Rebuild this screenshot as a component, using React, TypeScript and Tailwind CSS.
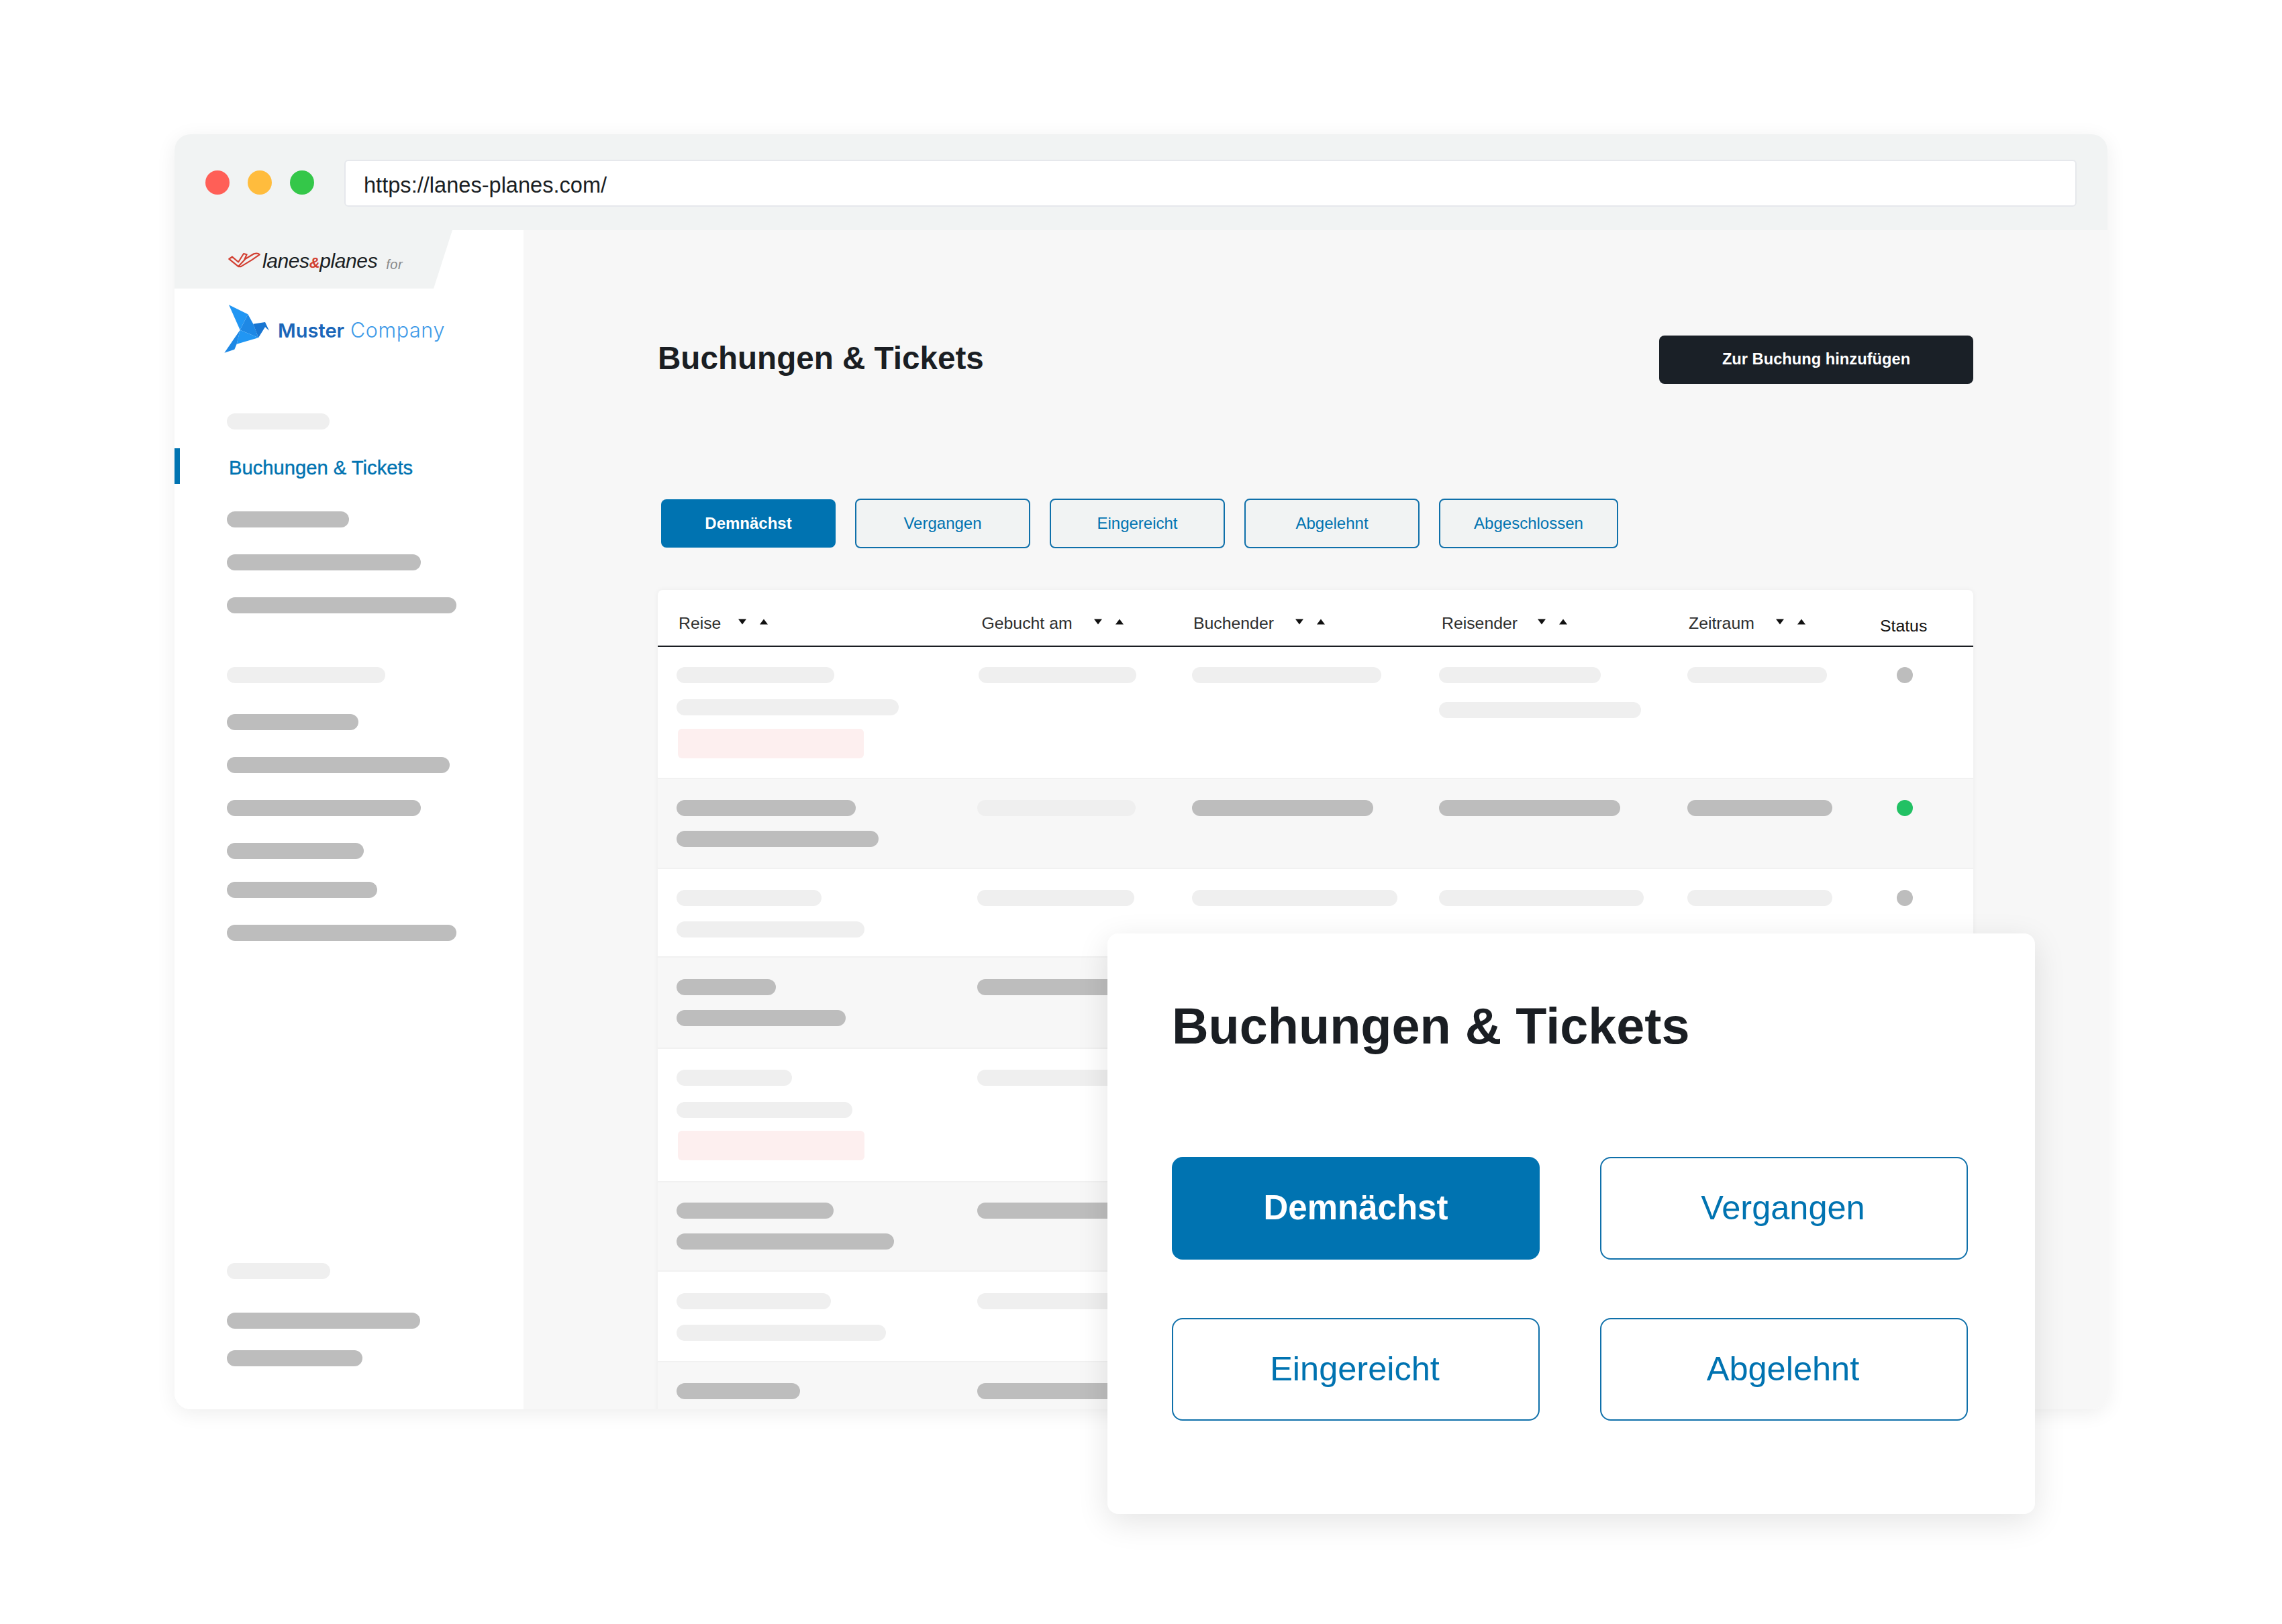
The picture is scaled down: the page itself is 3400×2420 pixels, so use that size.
import React from 'react';

const SANS = "font-['Liberation_Sans',Arial,sans-serif]";

type SideItem = { w: number; tone: 'light' | 'dark'; mt: string };

const sideTop: SideItem[] = [
  { w: 182, tone: 'dark', mt: 'mt-[41px]' },
  { w: 289, tone: 'dark', mt: 'mt-[40px]' },
  { w: 342, tone: 'dark', mt: 'mt-[40px]' },
  { w: 236, tone: 'light', mt: 'mt-[80px]' },
  { w: 196, tone: 'dark', mt: 'mt-[46px]' },
  { w: 332, tone: 'dark', mt: 'mt-[40px]' },
  { w: 289, tone: 'dark', mt: 'mt-[40px]' },
  { w: 204, tone: 'dark', mt: 'mt-[40px]' },
  { w: 224, tone: 'dark', mt: 'mt-[34px]' },
  { w: 342, tone: 'dark', mt: 'mt-[40px]' },
  { w: 154, tone: 'light', mt: 'mt-[480px]' },
  { w: 288, tone: 'dark', mt: 'mt-[50px]' },
  { w: 202, tone: 'dark', mt: 'mt-[32px]' },
];

const tabs = [
  { label: 'Vergangen', w: 'w-[261px]' },
  { label: 'Eingereicht', w: 'w-[261px]' },
  { label: 'Abgelehnt', w: 'w-[261px]' },
  { label: 'Abgeschlossen', w: 'w-[267px]' },
];

const columns = [
  { label: 'Reise', cell: 'w-[451.5px]', text: 'w-[88px]' },
  { label: 'Gebucht am', cell: 'w-[315.5px]', text: 'w-[166.5px]' },
  { label: 'Buchender', cell: 'w-[370px]', text: 'w-[151px]' },
  { label: 'Reisender', cell: 'w-[368px]', text: 'w-[142px]' },
  { label: 'Zeitraum', cell: 'w-[287px]', text: 'w-[129px]' },
];

type Row = {
  alt: boolean;
  size: string;
  gap: string;
  trip: number[];
  pink?: number;
  booked: number;
  bookedLight?: boolean;
  bookedOffset?: string;
  rest?: { booker: number; traveller: number[]; period: number; dot: string };
};

const rows: Row[] = [
  { alt: false, size: 'h-[197px] pt-[30px]', gap: 'gap-[24px]', trip: [235, 331], pink: 277, booked: 235, bookedOffset: 'ml-[2px]',
    rest: { booker: 282, traveller: [241, 301], period: 208, dot: 'bg-[#bdbdbd]' } },
  { alt: true, size: 'h-[134px] pt-[31px]', gap: 'gap-[22px]', trip: [267, 301], booked: 236, bookedLight: true,
    rest: { booker: 270, traveller: [270], period: 216, dot: 'bg-[#22c164]' } },
  { alt: false, size: 'h-[132px] pt-[31px]', gap: 'gap-[23px]', trip: [216, 280], booked: 234,
    rest: { booker: 306, traveller: [305], period: 216, dot: 'bg-[#bdbdbd]' } },
  { alt: true, size: 'h-[136px] pt-[32px]', gap: 'gap-[22px]', trip: [148, 252], booked: 235 },
  { alt: false, size: 'h-[199px] pt-[31px]', gap: 'gap-[23.5px]', trip: [172, 262], pink: 278, booked: 235 },
  { alt: true, size: 'h-[133px] pt-[30px]', gap: 'gap-[22px]', trip: [234, 324], booked: 235 },
  { alt: false, size: 'h-[135px] pt-[32px]', gap: 'gap-[23px]', trip: [230, 312], booked: 235 },
  { alt: true, size: 'h-[135px] pt-[31px]', gap: 'gap-[22px]', trip: [184], booked: 235 },
];

function Bar({ w, dark, className = '' }: { w: number; dark: boolean; className?: string }) {
  return (
    <div
      className={`h-[24px] rounded-full ${dark ? 'bg-[#bdbdbd]' : 'bg-[#efefef]'} ${className}`}
      style={{ width: w }}
    />
  );
}

function SortArrows() {
  return (
    <span className="flex items-center gap-[18px] -mt-[4px]">
      <svg width="14" height="9" viewBox="0 0 14 9"><path d="M1 0.5h12L7 8.5z" fill="#111" /></svg>
      <svg width="14" height="9" viewBox="0 0 14 9"><path d="M1 8.5h12L7 0.5z" fill="#111" /></svg>
    </span>
  );
}

function LanesMark() {
  return (
    <svg width="50" height="28" viewBox="15 15 150 85" fill="none" stroke="#d23f31" strokeWidth="6.5" strokeLinejoin="round">
      <path d="M18 48 L32 38 L60 62 L84 24 L98 28 L88 50 L130 25 Q148 20 156 28 L122 52 L72 82 L60 82 Z" />
      <path d="M60 82 L90 50" />
    </svg>
  );
}

function BirdLogo() {
  return (
    <svg width="76" height="80" viewBox="0 0 228 240">
      <polygon points="33,13 118,55 83,125" fill="#2196f3" />
      <polygon points="118,55 142,98 165,160 83,125" fill="#1e88e5" />
      <polygon points="142,98 195,90 213,128 195,112 165,160" fill="#1976d2" />
      <polygon points="83,125 165,160 68,188" fill="#2196f3" />
      <polygon points="83,125 68,188 58,212 13,227" fill="#1e88e5" />
    </svg>
  );
}

function Sidebar() {
  return (
    <aside className="w-[520px] h-full bg-white flex flex-col shrink-0">
      <div className="h-[87px] pl-[80px] pt-[32px] flex items-start bg-[#f1f3f3] [clip-path:polygon(0_0,414px_0,386px_100%,0_100%)]">
        <LanesMark />
        <span className="ml-[1px] -mt-[6px] text-[30px] leading-[40px] italic text-[#1a1e23] whitespace-nowrap tracking-[-0.4px]">
          lanes<span className="text-[22px] font-bold text-[#d23f31]">&amp;</span>planes
        </span>
        <span className="ml-[13px] -mt-[1px] text-[20px] leading-[40px] italic text-[#888] tracking-[0.5px]">for</span>
      </div>
      <div className="mt-[20px] ml-[70px] flex items-center">
        <BirdLogo />
        <span className="ml-[8px] mt-[4px] font-['Inter',sans-serif] text-[29px] whitespace-nowrap">
          <span className="font-semibold text-[#1b66b8]">Muster</span>
          <span className="ml-[9px] text-[30.5px] font-light tracking-[0.6px] text-[#3f9be8]">Company</span>
        </span>
      </div>
      <Bar w={153} dark={false} className="mt-[86px] ml-[78px]" />
      <div className="mt-[28px] h-[53px] flex items-center">
        <div className="w-[8px] h-full bg-[#0073b1]" />
        <span className="ml-[73px] mt-[7px] text-[29.2px] [-webkit-text-stroke:0.4px_#0073b1] text-[#0073b1] whitespace-nowrap">Buchungen &amp; Tickets</span>
      </div>
      {sideTop.map((item, i) => (
        <Bar key={i} w={item.w} dark={item.tone === 'dark'} className={`ml-[78px] ${item.mt}`} />
      ))}
    </aside>
  );
}

function BookingsTable() {
  return (
    <div className="mt-[62px] bg-white rounded-t-lg shadow-[0_0_8px_rgba(0,0,0,0.05)]">
      <div className="h-[85px] pl-[31px] pt-[16px] flex items-center border-b-2 border-[#1a1e23] text-[24.8px] text-[#2e2e2e]">
        {columns.map((col) => (
          <div key={col.label} className={`${col.cell} flex items-center`}>
            <span className={`${col.text} whitespace-nowrap`}>{col.label}</span>
            <SortArrows />
          </div>
        ))}
        <span className="mt-[8px] text-[#111] -ml-[2px]">Status</span>
      </div>
      {rows.map((row, i) => (
        <div
          key={i}
          className={`${row.size} pl-[28px] grid grid-cols-[448px_320px_368px_370px_312px_1fr] border-b-2 border-[#f1f1f1] ${row.alt ? 'bg-[#f7f7f7]' : 'bg-white'}`}
        >
          <div className={`flex flex-col ${row.gap}`}>
            {row.trip.map((w, j) => (
              <Bar key={j} w={w} dark={row.alt} />
            ))}
            {row.pink && (
              <div className="-mt-[4px] ml-[2px] h-[44px] rounded-md bg-[#fdefef]" style={{ width: row.pink }} />
            )}
          </div>
          <Bar w={row.booked} dark={row.alt && !row.bookedLight} className={row.bookedOffset} />
          {row.rest && (
            <>
              <Bar w={row.rest.booker} dark={row.alt} />
              <div className="flex flex-col gap-[28px]">
                {row.rest.traveller.map((w, j) => (
                  <Bar key={j} w={w} dark={row.alt} />
                ))}
              </div>
              <Bar w={row.rest.period} dark={row.alt} />
              <div className={`w-[24px] h-[24px] rounded-full ${row.rest.dot}`} />
            </>
          )}
        </div>
      ))}
    </div>
  );
}

function Callout() {
  return (
    <div className="absolute left-[1650px] top-[1391px] w-[1382px] h-[865px] bg-white rounded-2xl pt-[101px] px-[96px] shadow-[0_12px_48px_rgba(0,0,0,0.11)]">
      <h2 className="text-[75.6px] leading-none font-bold text-[#1a1e23] whitespace-nowrap">Buchungen &amp; Tickets</h2>
      <div className="mt-[156px] grid grid-cols-[548px_548px] gap-x-[90px] gap-y-[87px]">
        <button className="h-[153px] rounded-2xl bg-[#0073b1] text-white text-[51px] font-bold">Demnächst</button>
        <button className="h-[153px] rounded-2xl border-2 border-[#0f70aa] text-[#0073b1] text-[50.5px] pr-[3px]">Vergangen</button>
        <button className="h-[153px] rounded-2xl border-2 border-[#0f70aa] text-[#0073b1] text-[50.5px] pr-[3px]">Eingereicht</button>
        <button className="h-[153px] rounded-2xl border-2 border-[#0f70aa] text-[#0073b1] text-[50.5px] pr-[3px]">Abgelehnt</button>
      </div>
    </div>
  );
}

export default function App() {
  return (
    <div className={`relative w-[3400px] h-[2420px] bg-white pt-[200px] pl-[260px] overflow-hidden ${SANS}`}>
      <div className="w-[2880px] h-[1900px] rounded-3xl overflow-hidden flex flex-col bg-white shadow-[0_6px_30px_rgba(0,0,0,0.07)]">
        <div className="h-[143px] shrink-0 bg-[#f1f3f3] pt-[38px] pl-[46px] pr-[46px] flex items-start">
          <div className="h-[70px] flex items-center gap-[27px]">
            <span className="w-[36px] h-[36px] rounded-full bg-[#ff5f57] -mt-[2px]" />
            <span className="w-[36px] h-[36px] rounded-full bg-[#ffbc3d] -mt-[2px]" />
            <span className="w-[36px] h-[36px] rounded-full bg-[#34c749] -mt-[2px]" />
          </div>
          <div className="ml-[45px] flex-1 h-[70px] bg-white border-2 border-[#e6e8ec] rounded-md pl-[27px] pt-[6px] flex items-center text-[32.6px] text-[#1a1e23]">
            https://lanes-planes.com/
          </div>
        </div>
        <div className="flex-1 min-h-0 flex">
          <Sidebar />
          <main className="flex-1 min-w-0 bg-[#f7f7f7] px-[200px] pt-[157px] overflow-hidden">
            <div className="flex items-center justify-between">
              <h1 className="-mt-[4px] text-[47.6px] leading-none font-bold text-[#1a1e23]">Buchungen &amp; Tickets</h1>
              <button className="w-[468px] h-[72px] rounded-lg bg-[#1a2027] text-white text-[23.7px] font-bold">Zur Buchung hinzufügen</button>
            </div>
            <div className="mt-[171px] pl-[5px] flex items-center gap-[29px]">
              <button className="w-[260px] h-[72px] rounded-lg bg-[#0073b1] text-white text-[24px] font-bold">Demnächst</button>
              {tabs.map((tab) => (
                <button key={tab.label} className={`${tab.w} h-[74px] rounded-lg border-2 border-[#0f70aa] bg-[#f1f3f3] text-[#0073b1] text-[24px]`}>
                  {tab.label}
                </button>
              ))}
            </div>
            <BookingsTable />
          </main>
        </div>
      </div>
      <Callout />
    </div>
  );
}
